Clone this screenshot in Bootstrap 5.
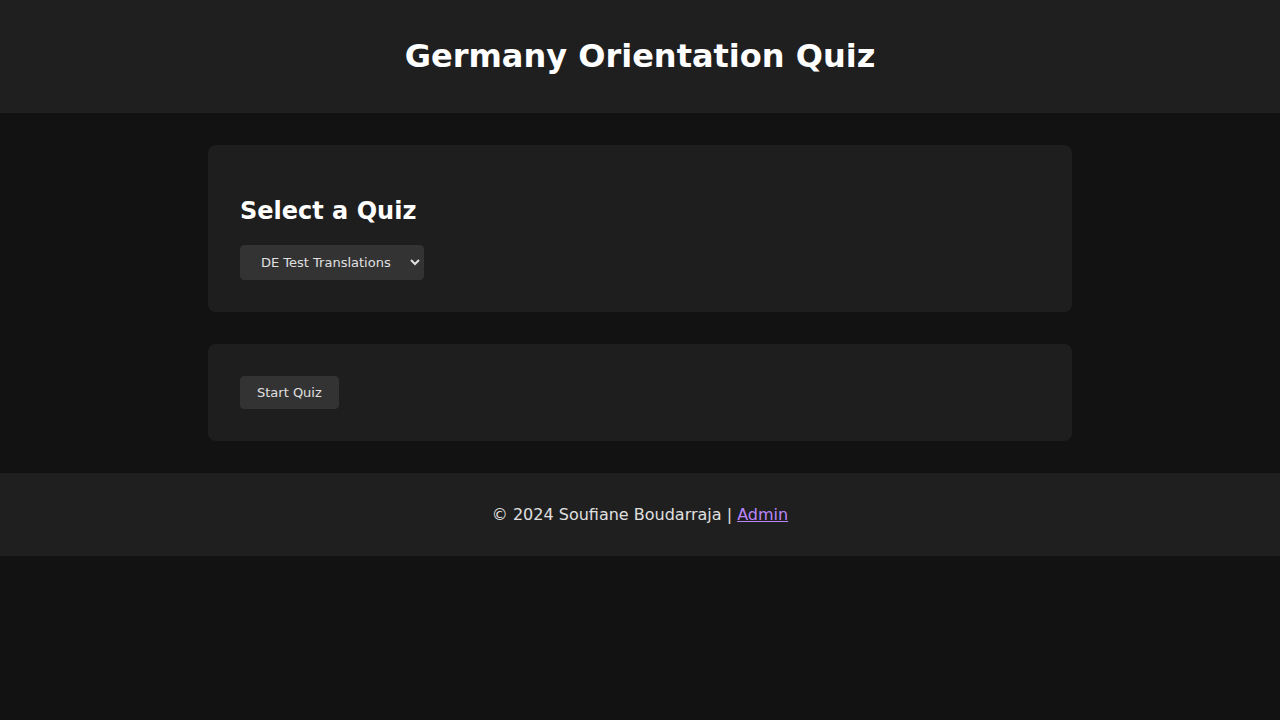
<!DOCTYPE html>
<html lang="en">
<head>
<meta charset="utf-8">
<meta name="viewport" content="width=device-width, initial-scale=1">
<title>Germany Orientation Quiz</title>
<link href="https://cdn.jsdelivr.net/npm/bootstrap@5.3.0/dist/css/bootstrap.min.css" rel="stylesheet">
<style>
body { background: #121212; color: #e0e0e0; font-family: "DejaVu Sans", sans-serif; line-height: 19px; }
.site-bar { background: #1f1f1f; padding: 32px; }
.site-bar a { color: #bb86fc; }
h1, h2 { color: #fff; }
h1 { font-size: 32px; line-height: 37px; padding: 6px 0; }
h2 { font-size: 24px; line-height: 28px; }
.quiz-main { max-width: 928px; padding: 32px; gap: 32px; }
.panel { background: #1e1e1e; border-radius: 8px; padding: 32px; }
.panel h2 { margin: 20px 0; }
.control { background: #333; color: #e0e0e0; border: 1px solid #333; border-radius: 4px; font-size: 13px; line-height: 15px; padding: 8px 16px; }
</style>
</head>
<body>
<header class="site-bar text-center">
  <h1 class="mb-0 fw-bold">Germany Orientation Quiz</h1>
</header>
<main class="quiz-main mx-auto d-flex flex-column">
  <section class="panel">
    <h2 class="fw-bold"><label for="quiz">Select a Quiz</label></h2>
    <select id="quiz" class="control d-block"><option>DE Test Translations</option></select>
  </section>
  <section class="panel">
    <button type="button" class="control d-block">Start Quiz</button>
  </section>
</main>
<footer class="site-bar text-center">
  <p class="mb-0">© 2024 Soufiane Boudarraja | <a href="#">Admin</a></p>
</footer>
<script src="https://cdn.jsdelivr.net/npm/bootstrap@5.3.0/dist/js/bootstrap.bundle.min.js"></script>
</body>
</html>
